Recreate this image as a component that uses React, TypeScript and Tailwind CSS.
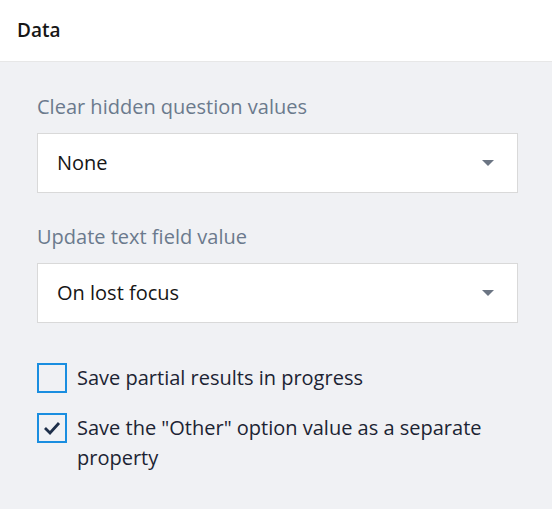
export default function App() {
  const font = { fontFamily: '"Open Sans", "Noto Sans", sans-serif' };
  return (
    <div className="w-[552px] h-[515px] bg-white" style={font}>
      <div className="h-[62px] border-b border-[#e7e7e7] flex items-center px-[17px]">
        <span className="text-[19px] font-semibold text-[#161616]">Data</span>
      </div>
      <div className="bg-[#f0f1f4] px-[37px] pt-[33px] pb-[36px] w-[552px]">
        <Field label="Clear hidden question values" value="None" />
        <div className="mt-[32px]">
          <Field label="Update text field value" value="On lost focus" />
        </div>
        <div className="mt-[40px] flex flex-col gap-[20px]">
          <Check label="Save partial results in progress" />
          <Check label={'Save the "Other" option value as a separate property'} checked />
        </div>
      </div>
    </div>
  );
}

function Field({ label, value }: { label: string; value: string }) {
  return (
    <div>
      <div className="text-[20px] leading-[24px] text-[#6b7a8d] mb-[14px]">{label}</div>
      <div className="h-[60px] w-[481px] bg-white border border-[#d9d9d9] flex items-center justify-between pl-[19px] pr-[23px]">
        <span className="text-[20px] text-[#161616]">{value}</span>
        <svg width="12" height="6" viewBox="0 0 12 6">
          <path d="M0 0 L12 0 L6 6 Z" fill="#6b7583" />
        </svg>
      </div>
    </div>
  );
}

function Check({ label, checked }: { label: string; checked?: boolean }) {
  return (
    <div className="flex items-start gap-[10px]">
      <div className="w-[30px] h-[30px] shrink-0 border-2 border-[#1a8ee0] flex items-center justify-center">
        {checked && (
          <svg width="18" height="14" viewBox="0 0 18 14">
            <path d="M2 7 L7 12 L16 2" fill="none" stroke="#1e2f4a" strokeWidth="2.8" />
          </svg>
        )}
      </div>
      <div className="text-[20px] leading-[30px] text-[#1c2433] w-[420px]">{label}</div>
    </div>
  );
}
